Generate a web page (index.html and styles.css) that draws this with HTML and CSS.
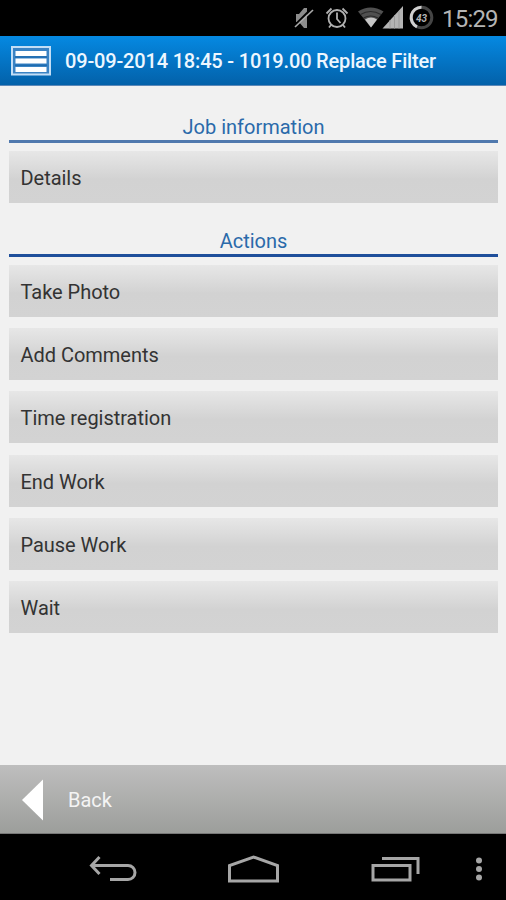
FILE: index.html
```html
<!DOCTYPE html>
<html lang="en">
<head>
    <meta charset="UTF-8">
    <meta name="viewport" content="width=device-width, initial-scale=1.0">
    <title>Replace Filter</title>
    <link rel="stylesheet" href="styles.css">
</head>
<body>

    <!-- Status bar -->
    <div class="status-bar">
        <svg class="status-icons" width="148" height="36" viewBox="0 0 148 36">
            <!-- muted -->
            <path d="M10 14h3l5-6h3v20h-3l-5-6h-3z" fill="#8c8c8c"/>
            <path d="M8 26L26 8" stroke="#000" stroke-width="2"/>
            <path d="M9 27L27 10" stroke="#a9a9a9" stroke-width="1.7"/>
            <!-- alarm -->
            <g fill="none" stroke="#b0b0b0" stroke-width="1.8">
                <circle cx="51" cy="18.5" r="8.5"/>
                <path d="M51 12.5v6.5l3.5 4M40.5 13.5l5-5M56.5 8.5l5 5M45 25l-2 2.5M57 25l2 2.5"/>
            </g>
            <!-- wifi -->
            <path d="M72 11.5Q84.5 3.5 97.5 11.5L85 27.5z" fill="#505050"/>
            <path d="M74.5 14.5q10-6 20.5 0M77.5 18q7-4 14.5 0" fill="none" stroke="#2a2a2a" stroke-width="1.2"/>
            <path d="M79 19.500q6-4 12 0L85 27.5z" fill="#c6c6c6"/>
            <!-- signal -->
            <path d="M96.5 28.5L117 6v22.500z" fill="#b4b4b4"/>
            <path d="M104 20v8.5M108.5 15v13.5M113 11v17.5" stroke="#9a9a9a"/>
            <!-- battery -->
            <circle cx="135.5" cy="17.5" r="10.3" fill="none" stroke="#454545" stroke-width="3"/>
            <path d="M135.500 7.2A10.3 10.3 0 0 0 131 26.8" fill="none" stroke="#d0d0d0" stroke-width="3"/>
            <text class="battery-text" x="135.5" y="21.5" text-anchor="middle">43</text>
        </svg>
        <span class="clock">15:29</span>
    </div>

    <!-- Title -->
    <div class="header">
        <svg width="42" height="32" viewBox="0 0 42 32">
            <rect x="2" y="2" width="38" height="27.5" fill="#3a83c4" stroke="#c3def6" stroke-width="2"/>
            <path d="M5.5 8.5h31M5.5 16h31M5.5 24.5h31" stroke="#fff" stroke-width="5"/>
            <path d="M5 12h32M5 20.3h32" stroke="#1f6cb0" stroke-width="1.4"/>
        </svg>
        <span class="title">09-09-2014 18:45 - 1019.00 Replace Filter</span>
    </div>

    <div class="content">
        <div class="heading">Job information</div>
        <div class="list">
            <button>Details</button>
        </div>
        <div class="heading actions">Actions</div>
        <div class="list">
            <button>Take Photo</button>
            <button>Add Comments</button>
            <button>Time registration</button>
            <button>End Work</button>
            <button>Pause Work</button>
            <button>Wait</button>
        </div>
    </div>

    <div class="footer">
        <svg width="22" height="42" viewBox="0 0 22 42"><path d="M0 21L21 .5v41z" fill="#fff"/></svg>
        <span class="back">Back</span>
    </div>

    <!-- Navigation bar -->
    <div class="nav">
        <svg class="nav-back" width="48" height="28" viewBox="0 0 48 28" fill="none" stroke="#a6a6a6" stroke-width="3">
            <path d="M3 10.5h36a7 7 0 0 1 0 14H21"/>
            <path d="M10.5 2L2.5 10.5l8 8.500"/>
        </svg>
        <svg class="nav-home" width="52" height="28" viewBox="0 0 52 28" fill="none" stroke="#a6a6a6" stroke-width="3">
            <path d="M1.5 26V10.5L25.500 2l24 8.5V26z"/>
        </svg>
        <svg class="nav-recent" width="50" height="26" viewBox="0 0 50 26" fill="none" stroke="#a6a6a6" stroke-width="3">
            <path d="M2 9.5h37v14.5H2z"/>
            <path d="M11 2.5h36v15.5"/>
        </svg>
        <svg class="nav-menu" width="8" height="24" viewBox="0 0 8 24" fill="#a6a6a6">
            <circle cx="4" cy="3.5" r="3"/>
            <circle cx="4" cy="12" r="3"/>
            <circle cx="4" cy="20.5" r="3"/>
        </svg>
    </div>
</body>
</html>
```

FILE: styles.css
```css
* {
    box-sizing: border-box;
}
body {
    margin: 0;
    height: 900px;
    display: flex;
    flex-direction: column;
    overflow: hidden;
    font-family: Roboto, sans-serif;
    font-size: 20px;
    background-color: #f1f1f1;
}
.status-bar {
    height: 36px;
    display: flex;
    align-items: center;
    padding-left: 286px;
    background: #000;
}
.status-icons {
    flex: none;
}
.battery-text {
    font-size: 10px;
    font-style: italic;
    font-weight: bold;
    fill: #b5b5b5;
}
.clock {
    margin-left: 8px;
    font-size: 24px;
    line-height: 36px;
    letter-spacing: -0.8px;
    padding-top: 1px;
    color: #b4b4b4;
}
.header {
    height: 50px;
    display: flex;
    align-items: center;
    padding-left: 10px;
    background: linear-gradient(#0589e2, #0361a9);
    border-bottom: 1px solid #5c88b8;
    color: #eef7ff;
}
.title {
    margin-left: 13px;
    padding-top: 1px;
    font-size: 20px;
    font-weight: 500;
    letter-spacing: -0.17px;
    white-space: nowrap;
}

/* List */
.content {
    flex: 1;
    padding: 26px 8px 0 9px;
}
.heading {
    height: 31px;
    line-height: 31px;
    text-align: center;
    color: #2a6aaa;
    border-bottom: 3px solid #5079ae;
}
.heading.actions {
    margin-top: 23px;
    border-bottom-color: #1f4f9b;
}
.list {
    display: flex;
    flex-direction: column;
    gap: 11.2px;
    padding-top: 8px;
}
button {
    height: 52px;
    padding: 2px 11.5px 0;
    border: none;
    background: linear-gradient(#e7e7e7, #d2d2d2 55%, #d3d3d3);
    font-family: inherit;
    font-size: 20px;
    letter-spacing: -0.03px;
    text-align: left;
    color: #333;
}
.footer {
    height: 69px;
    display: flex;
    align-items: center;
    padding: 2px 0 0 22px;
    background: linear-gradient(#bebebe, #9c9e9b);
    border-bottom: 1px solid #777;
    color: #f4f4f4;
}
.back {
    margin-left: 24px;
}

/* Bottom buttons */
.nav {
    height: 66px;
    display: flex;
    align-items: center;
    padding: 3px 0 0 89px;
    background: #000;
}
.nav-home,
.nav-recent {
    margin-left: 91px;
}
.nav-menu {
    margin-left: 54px;
}
```
